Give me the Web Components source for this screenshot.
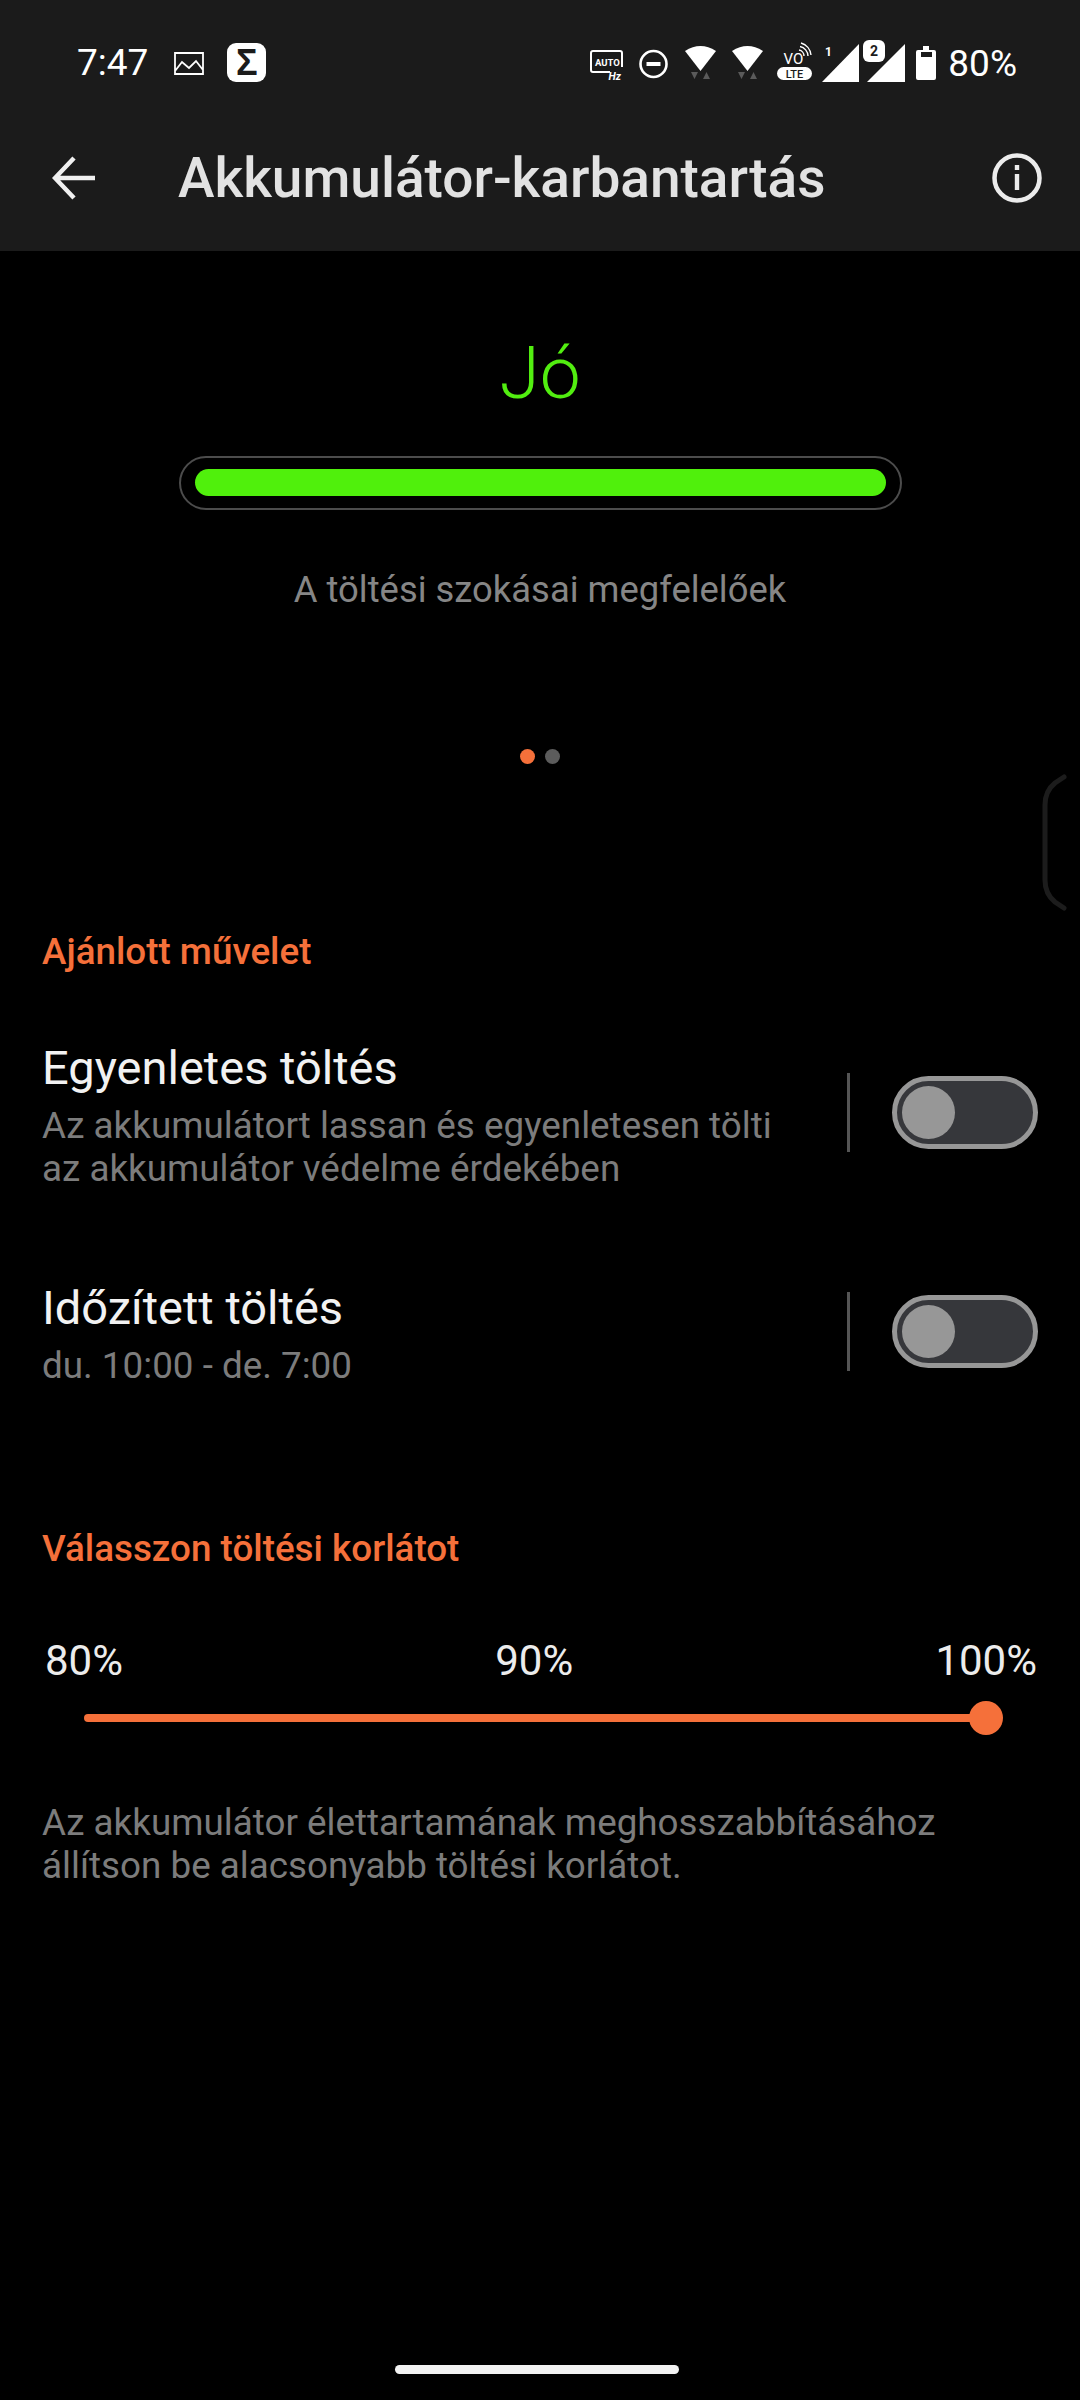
<!DOCTYPE html>
<html lang="hu">
<head>
<meta charset="utf-8">
<title>Akkumulátor-karbantartás</title>
<style>
    html,body{margin:0;padding:0;background:#000;}
    body{width:1080px;height:2400px;overflow:hidden;font-family:Roboto,"Noto Sans",sans-serif;position:relative;display:flex;flex-direction:column;}
</style>
</head>
<body>
<template id="statusBarTemplate">
    <style>
        :host{display:flex;align-items:center;height:124px;padding:0 63px 0 77px;color:#fff;}
        svg{display:block;height:44px;flex:none;}
        .time{font-size:37px;line-height:44px;margin:2px 26px 0 0;}
        .sigma{width:39px;height:39px;border-radius:9px;background:#fff;color:#1b1b1b;font:700 36px/39px "Liberation Sans",sans-serif;text-align:center;margin-left:23px;}
        .right{margin-left:auto;display:flex;align-items:center;}
        .pct{font-size:37px;line-height:44px;margin:3px 0 0 12px;}
    </style>
    <span class="time">7:47</span>
    <svg width="30" viewBox="0 0 30 44"><path d="M1 13H29V34H1Z M1 31L8 22L15 28L22 21L29 30" fill="none" stroke="#fff" stroke-width="1.8"/></svg>
    <div class="sigma">Σ</div>
    <div class="right">
        <svg width="33" viewBox="0 0 33 44" style="margin-right:16px">
            <path d="M20 32H3a2 2 0 0 1-2-2V13a2 2 0 0 1 2-2H30a2 2 0 0 1 2 2V27" fill="none" stroke="#fff" stroke-width="2"/>
            <text x="5" y="26" font-family="Roboto" font-weight="700" font-size="9.5" fill="#fff">AUTO</text>
            <text x="18.5" y="40" font-family="Roboto" font-weight="700" font-style="italic" font-size="10.5" fill="#fff">Hz</text>
        </svg>
        <svg width="29" viewBox="0 0 29 44" style="margin-right:17px"><circle cx="14.5" cy="24" r="13" fill="none" stroke="#fff" stroke-width="2.6"/><rect x="7.5" y="22" width="14" height="4" fill="#fff"/></svg>
        <svg width="31" viewBox="0 0 31 44" style="margin-right:16px"><path d="M0 11Q15.5 1 31 11L15.5 31Z" fill="#fff"/><path d="M6 32H13L9.5 39Z M18 39H25L21.5 32Z" fill="#5a5a5a"/></svg>
        <svg width="31" viewBox="0 0 31 44" style="margin-right:14px"><path d="M0 11Q15.5 1 31 11L15.5 31Z" fill="#fff"/><path d="M6 32H13L9.5 39Z M18 39H25L21.5 32Z" fill="#5a5a5a"/></svg>
        <svg width="35" viewBox="0 0 35 44" style="margin-right:10px">
            <text x="6.5" y="24" font-family="Roboto" font-size="15" fill="#fff">VO</text>
            <path d="M22 10a6 6 0 0 1 5 6 M23 6.500a10 10 0 0 1 8 9.500 M24 3a14 14 0 0 1 10 12" fill="none" stroke="#fff" stroke-width="1.400"/>
            <rect x="0" y="27" width="35" height="13" rx="6.500" fill="#fff"/>
            <text x="17.500" y="37.500" text-anchor="middle" font-family="Roboto" font-weight="500" font-size="11" fill="#1b1b1b">LTE</text>
        </svg>
        <svg width="38" viewBox="0 0 38 44" style="margin-right:3px"><path d="M0 42L37 4V42Z" fill="#fff"/><text x="3" y="16" font-family="Roboto" font-weight="700" font-size="12" fill="#fff">1</text></svg>
        <svg width="42" viewBox="0 0 42 44" style="margin-right:11px"><path d="M4 42L42 4V42Z" fill="#fff"/><rect x="0" y="0" width="22" height="22" rx="6" fill="#fff"/><text x="11" y="16" text-anchor="middle" font-family="Roboto" font-weight="700" font-size="14" fill="#1b1b1b">2</text></svg>
        <svg width="20" viewBox="0 0 20 44"><path d="M7 6H13V10H18a2 2 0 0 1 2 2V38a2 2 0 0 1-2 2H2a2 2 0 0 1-2-2V12a2 2 0 0 1 2-2H7Z" fill="#fff"/><rect x="5" y="12" width="11" height="5" fill="#1b1b1b"/></svg>
        <span class="pct">80%</span>
    </div>
</template>

<template id="appHeaderTemplate">
    <style>
        :host{display:block;height:251px;background:#1b1b1b;flex:none;}
        .row{display:flex;align-items:center;height:108px;padding:0 38px 0 52px;}
        svg{display:block;flex:none;}
        h1{margin:0 0 0 82px;flex:1;font-size:55px;font-weight:500;line-height:108px;color:#e2e2e2;white-space:nowrap;}
    </style>
    <status-bar></status-bar>
    <div class="row">
        <svg width="44" height="44" viewBox="0 0 44 44"><path d="M3 22H43 M22 2L3 22L22 42" fill="none" stroke="#f0f0f0" stroke-width="4.500"/></svg>
        <h1><slot></slot></h1>
        <svg width="50" height="50" viewBox="0 0 50 50"><circle cx="25" cy="25" r="22.500" fill="none" stroke="#ececec" stroke-width="4.500"/><rect x="22.800" y="12" width="4.400" height="5" fill="#ececec"/><rect x="22.800" y="21" width="4.400" height="16" fill="#ececec"/></svg>
    </div>
</template>

<template id="healthPanelTemplate">
    <style>
        :host{display:flex;flex-direction:column;align-items:center;height:549px;flex:none;}
        .grade{margin-top:79px;font-size:73px;font-weight:300;line-height:86px;color:#52ee10;}
        .bar{box-sizing:border-box;width:723px;height:54px;margin:40px 0 0 1px;border:2.500px solid #4c4c4c;border-radius:27px;padding:11px 14px;}
        .fill{height:27px;border-radius:14px;background:#50f00c;}
        .msg{margin-top:58px;font-size:36.400px;line-height:44px;color:#868686;}
        .dots{display:flex;gap:10px;margin-top:137px;}
        .dots i{display:block;width:15px;height:15px;border-radius:50%;background:#5c5c5c;}
        .dots i:first-child{background:#f5703a;}
    </style>
    <div class="grade"><slot name="grade"></slot></div>
    <div class="bar"><div class="fill"></div></div>
    <div class="msg"><slot name="msg"></slot></div>
    <div class="dots"><i></i><i></i></div>
</template>

<template id="sectionLabelTemplate">
    <style>
        :host{display:block;flex:none;padding-left:42px;font-size:36.800px;font-weight:500;line-height:40px;color:#f5703a;}
    </style>
    <slot></slot>
</template>

<template id="toggleSwitchTemplate">
    <style>
        :host{display:block;flex:none;box-sizing:border-box;width:146px;height:73px;border:5px solid #979797;border-radius:37px;background:#36373b;padding:5px;margin-bottom:5px;}
        i{display:block;width:53px;height:53px;border-radius:50%;background:#979797;}
    </style>
    <i></i>
</template>

<template id="settingRowTemplate">
    <style>
        :host{display:flex;align-items:center;flex:none;padding:0 42px;}
        .text{width:760px;padding-right:45px;flex:none;}
        .title{font-size:47px;line-height:56px;color:#f2f2f2;}
        .sub{margin-top:8px;font-size:36.800px;line-height:43px;color:#7c7c7c;}
        .sep{width:2.500px;height:79px;background:#555;flex:none;margin:0 42.500px 5px 0;}
    </style>
    <div class="text">
        <div class="title"><slot name="title"></slot></div>
        <div class="sub"><slot name="sub"></slot></div>
    </div>
    <div class="sep"></div>
    <toggle-switch></toggle-switch>
</template>

<template id="limitSliderTemplate">
    <style>
        :host{display:block;flex:none;}
        .labels{display:flex;justify-content:space-between;padding:0 43px 0 45px;font-size:42px;line-height:50px;color:#ececec;}
        .labels span:nth-child(2){margin-left:10px;}
        .track{display:flex;align-items:center;height:34px;margin:15px 0 0 84px;width:919px;}
        .line{flex:1;height:8px;border-radius:4px 0 0 4px;background:#f5703a;}
        .knob{width:34px;height:34px;border-radius:50%;background:#f5703a;margin-left:-1px;flex:none;}
    </style>
    <div class="labels"><span>80%</span><span>90%</span><span>100%</span></div>
    <div class="track"><div class="line"></div><div class="knob"></div></div>
</template>

<template id="noteTextTemplate">
    <style>
        :host{display:block;flex:none;padding:0 42px;font-size:36.800px;line-height:43px;color:#7c7c7c;}
    </style>
    <slot></slot>
</template>

<template id="homePillTemplate">
    <style>
        :host{display:block;flex:none;width:284px;height:9px;border-radius:5px;background:#f2f2f2;margin:auto auto 26px 395px;}
    </style>
</template>

<template id="sideHandleTemplate">
    <style>
        :host{display:block;position:absolute;left:1041px;top:773px;width:26px;height:139px;}
        svg{display:block;}
    </style>
    <svg width="26" height="139" viewBox="0 0 26 139"><path d="M23 4L14 10Q4 18 4 32V107Q4 121 14 129L23 135" fill="none" stroke="#1c1c1c" stroke-width="5" stroke-linecap="round"/></svg>
</template>

<app-header>Akkumulátor-karbantartás</app-header>
<health-panel>
    <span slot="grade">Jó</span>
    <span slot="msg">A töltési szokásai megfelelőek</span>
</health-panel>
<section-label style="margin-top:131.500px">Ajánlott művelet</section-label>
<setting-row style="margin-top:68.500px">
    <span slot="title">Egyenletes töltés</span>
    <span slot="sub">Az akkumulátort lassan és egyenletesen tölti az akkumulátor védelme érdekében</span>
</setting-row>
<setting-row style="margin-top:90px">
    <span slot="title">Időzített töltés</span>
    <span slot="sub">du. 10:00 - de. 7:00</span>
</setting-row>
<section-label style="margin-top:141.500px">Válasszon töltési korlátot</section-label>
<limit-slider style="margin-top:67.500px"></limit-slider>
<note-text style="margin-top:66px">Az akkumulátor élettartamának meghosszabbításához állítson be alacsonyabb töltési korlátot.</note-text>
<home-pill></home-pill>
<side-handle></side-handle>

<script>
    (function registerAll(customElements) {
        'use strict';

        function define(tag, templateId) {
            class Element extends HTMLElement {
                constructor(){
                    super();
                    const shadowRoot = this.attachShadow({mode:'open'});
                    const templ = document.getElementById(templateId);
                    shadowRoot.appendChild(document.importNode(templ.content,true));
                }
            }
            customElements.define(tag,Element);
        }

        define('status-bar','statusBarTemplate');
        define('app-header','appHeaderTemplate');
        define('health-panel','healthPanelTemplate');
        define('section-label','sectionLabelTemplate');
        define('toggle-switch','toggleSwitchTemplate');
        define('setting-row','settingRowTemplate');
        define('limit-slider','limitSliderTemplate');
        define('note-text','noteTextTemplate');
        define('home-pill','homePillTemplate');
        define('side-handle','sideHandleTemplate');
    })(window.customElements);
</script>
</body>
</html>
